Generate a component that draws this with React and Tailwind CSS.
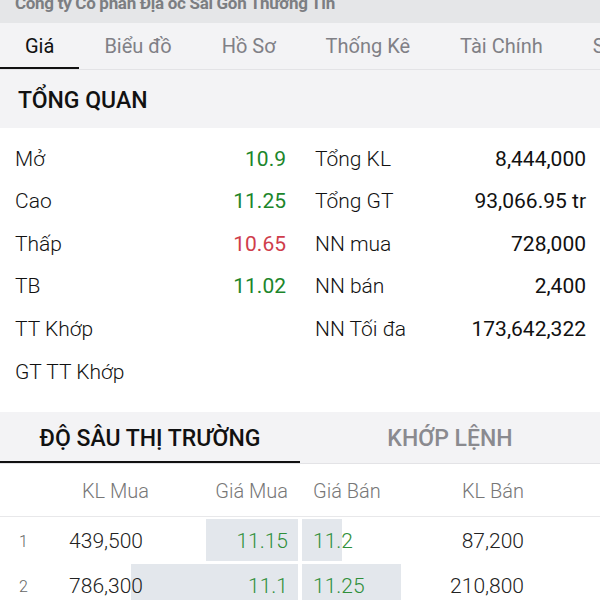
import React from 'react';

const tabs = ['Giá', 'Biểu đồ', 'Hồ Sơ', 'Thống Kê', 'Tài Chính', 'Sự kiện'];

const leftStats = [
  { label: 'Mở', value: '10.9', color: 'text-[#1c862b]' },
  { label: 'Cao', value: '11.25', color: 'text-[#1c862b]' },
  { label: 'Thấp', value: '10.65', color: 'text-[#cf3d4b]' },
  { label: 'TB', value: '11.02', color: 'text-[#1c862b]' },
  { label: 'TT Khớp', value: '' },
  { label: 'GT TT Khớp', value: '' },
];

const rightStats = [
  { label: 'Tổng KL', value: '8,444,000' },
  { label: 'Tổng GT', value: '93,066.95 tr' },
  { label: 'NN mua', value: '728,000' },
  { label: 'NN bán', value: '2,400' },
  { label: 'NN Tối đa', value: '173,642,322' },
];

// bar widths in px, scaled from volume
const depth = [
  { no: 1, buyVol: '439,500', buy: '11.15', sell: '11.2', sellVol: '87,200', buyW: 92, sellW: 40 },
  { no: 2, buyVol: '786,300', buy: '11.1', sell: '11.25', sellVol: '210,800', buyW: 167, sellW: 99 },
];

function StatRow({ label, value, color }) {
  return (
    <div className="flex h-[42.6px] items-center justify-between">
      <span className="font-light text-[#111]">{label}</span>
      <span className={color || 'text-[#111]'}>{value}</span>
    </div>
  );
}

export default function App() {
  return (
    <div className="w-[600px] h-[600px] overflow-hidden bg-white font-['Roboto','Noto_Sans',sans-serif]">
      {/* Company title */}
      <div className="h-[23px] overflow-hidden bg-[#e5e6e8] pl-[15px]">
        <div className="mt-[-5px] text-[17px] leading-[17px] font-bold tracking-[-0.3px] text-[#7c7e82]">
          Công ty Cổ phần Địa ốc Sài Gòn Thương Tín
        </div>
      </div>

      {/* Tabs */}
      <div className="flex h-[47px] overflow-hidden whitespace-nowrap border-b border-[#e3e3e6] bg-[#f3f3f5]">
        {tabs.map((t, i) => (
          <div
            key={t}
            className={`relative flex shrink-0 items-center px-[25px] text-[20px] ${
              i === 0 ? 'text-[#111]' : 'text-[#808086]'
            }`}
          >
            {t}
            {i === 0 && <div className="absolute bottom-0 left-0 right-0 h-[2px] bg-[#111]" />}
          </div>
        ))}
      </div>

      {/* Tổng quan */}
      <div className="flex h-[58px] items-center bg-[#f3f3f5] pl-[18px] pt-[5px] text-[23px] font-medium text-[#111]">
        TỔNG QUAN
      </div>

      <div className="grid h-[284px] grid-cols-2 pt-[10px] text-[21px]">
        <div className="pl-[15px] pr-[14px]">
          {leftStats.map((s) => (
            <StatRow key={s.label} {...s} />
          ))}
        </div>
        <div className="pl-[15px] pr-[14px]">
          {rightStats.map((s) => (
            <StatRow key={s.label} {...s} />
          ))}
        </div>
      </div>

      {/* Depth tabs */}
      <div className="grid h-[52px] grid-cols-2 border-b border-[#e3e3e6] bg-[#f3f3f5] text-[23px] font-medium">
        <div className="relative flex items-center justify-center pt-[3px] text-[#111]">
          ĐỘ SÂU THỊ TRƯỜNG
          <div className="absolute bottom-0 left-0 right-0 h-[2px] bg-[#111]" />
        </div>
        <div className="flex items-center justify-center pt-[3px] text-[#8a8a8f]">KHỚP LỆNH</div>
      </div>

      {/* Header */}
      <div className="grid h-[53px] grid-cols-2 border-b border-[#e8e8ea] text-[20px] font-light text-[#777]">
        <div className="flex items-center pt-[2px]">
          <div className="w-[60px]" />
          <div className="w-[89px] text-right">KL Mua</div>
          <div className="flex-1 pr-[12px] text-right">Giá Mua</div>
        </div>
        <div className="flex items-center justify-between pl-[13px] pr-[76px] pt-[2px]">
          <div>Giá Bán</div>
          <div>KL Bán</div>
        </div>
      </div>

      {/* Rows */}
      {depth.map((r) => (
        <div key={r.no} className="grid h-[45px] grid-cols-2 text-[21px] font-light">
          <div className="relative flex items-center pt-[4px]">
            <div
              className="absolute right-[2px] top-[2px] bottom-[1px] bg-[#e3e7ec]"
              style={{ width: r.buyW }}
            />
            <div className="relative w-[60px] pl-[19px] text-[16px] text-[#666]">{r.no}</div>
            <div className="relative w-[83px] text-right text-[#222]">{r.buyVol}</div>
            <div className="relative flex-1 pr-[12px] text-right text-[#2f8f3a]">{r.buy}</div>
          </div>
          <div className="relative flex items-center justify-between pl-[13px] pr-[76px] pt-[4px]">
            <div
              className="absolute left-[2px] top-[2px] bottom-[1px] bg-[#e3e7ec]"
              style={{ width: r.sellW }}
            />
            <div className="relative text-[#2f8f3a]">{r.sell}</div>
            <div className="relative text-[#222]">{r.sellVol}</div>
          </div>
        </div>
      ))}
    </div>
  );
}
